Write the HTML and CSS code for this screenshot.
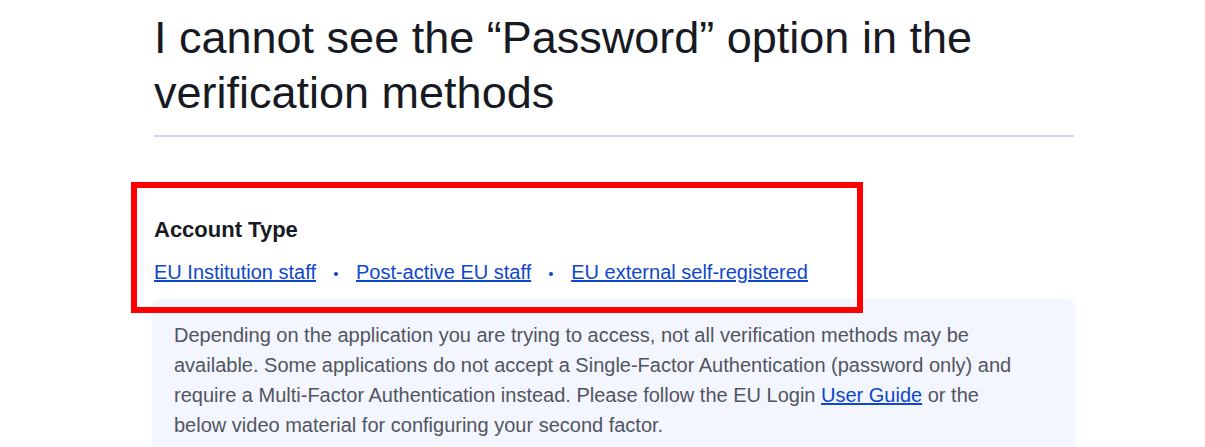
FILE: index.html
```html
<!DOCTYPE html>
<html lang="en">
<head>
<meta charset="utf-8">
<title>EU Login FAQ</title>
<link rel="stylesheet" href="styles.css">
</head>
<body>
<main class="page">
  <h1 class="title">I cannot see the “Password” option in the verification methods</h1>
  <section class="account">
    <h2 class="account-title">Account Type</h2>
    <nav class="account-links">
      <a href="#" class="link">EU Institution staff</a>
      <span class="dot" aria-hidden="true"></span>
      <a href="#" class="link">Post-active EU staff</a>
      <span class="dot" aria-hidden="true"></span>
      <a href="#" class="link">EU external self-registered</a>
    </nav>
    <div class="highlight"></div>
  </section>
  <div class="card">
    <p class="card-text">Depending on the application you are trying to access, not all verification methods may be available. Some applications do not accept a Single-Factor Authentication (password only) and require a Multi-Factor Authentication instead. Please follow the EU Login <a href="#" class="link">User Guide</a> or the below video material for configuring your second factor.</p>
  </div>
</main>
</body>
</html>
```

FILE: styles.css
```css
html, body {
  margin: 0;
  padding: 0;
  background: #ffffff;
  overflow: hidden;
}
body {
  font-family: "Liberation Sans", Arial, sans-serif;
  color: #171a22;
}
.page {
  width: 920px;
  margin-left: 154px;
  padding-top: 10px;
}
.title {
  margin: 0;
  font-size: 45px;
  line-height: 55px;
  font-weight: 400;
  color: #171a22;
  padding-bottom: 15px;
  border-bottom: 2px solid #cfdaf5;
}
.account {
  position: relative;
  margin-top: 79px;
}
.account-title {
  margin: 0;
  font-size: 22px;
  line-height: 28px;
  font-weight: 700;
  color: #171a22;
}
.account-links {
  margin-top: 14px;
  display: flex;
  align-items: center;
  gap: 18px;
  font-size: 20px;
  line-height: 28px;
}
.link {
  color: #0e47cb;
  text-decoration: underline;
}
.dot {
  width: 4px;
  height: 4px;
  border-radius: 50%;
  background: #0e47cb;
  margin-top: 3px;
}
.highlight {
  position: absolute;
  left: -23px;
  top: -34px;
  width: 720px;
  height: 119px;
  border: 6px solid #ff0000;
  pointer-events: none;
}
.card {
  margin-top: 14px;
  background: #f3f6fe;
  border-radius: 8px;
  box-shadow: 0 0 4px rgba(60, 80, 140, 0.12);
  padding: 20px 50px 16px 20px;
}
.card-text {
  margin: 0;
  font-size: 20px;
  line-height: 30px;
  color: #515560;
}
```
